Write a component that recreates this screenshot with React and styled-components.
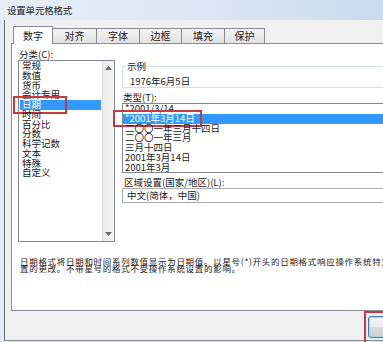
import React from 'react';
import styled, { createGlobalStyle } from 'styled-components';

const GlobalStyle = createGlobalStyle`
  html, body {
    margin: 0;
    padding: 0;
  }
  body {
    width: 383px;
    height: 342px;
    overflow: hidden;
    background: #dfe8f3;
    font-family: "Noto Sans CJK SC", "Noto Sans", sans-serif;
    color: #1a1a1a;
  }
`

const Window = styled.div`
  width: 383px;
  height: 342px;
  overflow: hidden;
  display: flex;
  flex-direction: column;
  background: #dfe8f3;
`

const TitleBar = styled.div`
  height: 20px;
  flex: none;
  display: flex;
  align-items: center;
  padding-left: 7px;
  background: linear-gradient(90deg, #e6eef8 0%, #dbe6f4 55%, #c8daef 100%);
  font-size: 9.5px;
  letter-spacing: -0.2px;
  color: #1e1e1e;
`

const Frame = styled.div`
  flex: 1;
  min-height: 0;
  display: flex;
  padding-left: 4px;
`

const Body = styled.div`
  width: 537px;
  flex: none;
  box-sizing: border-box;
  margin-bottom: 1px;
  display: flex;
  flex-direction: column;
  padding: 6px 6px 0 6px;
  background: #f0f0f0;
  border-left: 1px solid #5f6d7c;
  border-bottom: 1px solid #7a8898;
`

const TabRow = styled.div`
  display: flex;
  align-items: flex-end;
  height: 17px;
  padding-left: 2px;
  position: relative;
  z-index: 1;
`

const Tab = styled.div`
  width: ${p => p.$w}px;
  height: ${p => (p.$active ? 18 : 15)}px;
  margin-bottom: ${p => (p.$active ? -1 : 0)}px;
  margin-left: ${p => (p.$first ? 0 : -1)}px;
  box-sizing: border-box;
  display: flex;
  align-items: center;
  justify-content: center;
  font-size: 10px;
  line-height: 1;
  color: #222;
  border: 1px solid #898c95;
  border-bottom: none;
  background: ${p => (p.$active ? '#fff' : 'linear-gradient(#f4f4f4, #e2e2e2)')};
  position: relative;
  z-index: ${p => (p.$active ? 2 : 1)};
`

const Panel = styled.div`
  height: 268px;
  flex: none;
  box-sizing: border-box;
  border: 1px solid #898c95;
  background: #fff;
  padding: 5px 0 0 6px;
  display: flex;
  flex-direction: column;
`

const Top = styled.div`
  display: flex;
  gap: 7px;
`

const LeftCol = styled.div`
  width: 97px;
  flex: none;
  display: flex;
  flex-direction: column;
`

const Label = styled.div`
  font-size: 9.5px;
  line-height: ${p => p.$lh || 10}px;
  margin-top: ${p => p.$mt || 0}px;
  padding-left: ${p => p.$pl || 1}px;
  white-space: nowrap;
`

const CatList = styled.div`
  height: 182px;
  box-sizing: border-box;
  border: 1px solid #828790;
  display: flex;
`

const CatItems = styled.div`
  flex: 1;
  padding: 0 1px;
`

const Item = styled.div`
  height: 9.75px;
  line-height: 9.75px;
  font-size: 9.5px;
  padding-left: 2px;
  white-space: nowrap;
  position: relative;
  background: ${p => (p.$sel ? '#3399ff' : 'transparent')};
  color: ${p => (p.$sel ? '#fff' : '#1a1a1a')};
`

const ScrollBar = styled.div`
  width: 12px;
  flex: none;
  display: flex;
  flex-direction: column;
  justify-content: space-between;
  align-items: center;
  padding: 5px 0;
  box-sizing: border-box;
  background: linear-gradient(90deg, #ebebeb, #f6f6f6);
  border-left: 1px solid #e2e2e2;
`

const Mark = styled.div`
  position: absolute;
  left: ${p => p.$l}px;
  top: ${p => p.$t}px;
  width: ${p => p.$w}px;
  height: ${p => p.$h}px;
  box-sizing: border-box;
  border: 2px solid #c63a43;
  pointer-events: none;
`

const RightCol = styled.div`
  flex: 1;
  display: flex;
  flex-direction: column;
  padding-right: 12px;
`

const Group = styled.fieldset`
  margin: 12px 0 0 0;
  padding: 0 0 1px 7px;
  border: 1px solid #d5dfe5;
  min-width: 0;
`

const Legend = styled.legend`
  margin-left: -4px;
  padding: 0 1px;
  font-size: 9.5px;
  line-height: 10px;
`

const Sample = styled.div`
  margin-top: 5px;
  font-size: 9.5px;
  line-height: 10px;
`

const TypeList = styled.div`
  margin-top: 1px;
  height: 70px;
  box-sizing: border-box;
  border: 1px solid #828790;
  border-right-color: #b8bcc2;
`

const Select = styled.div`
  margin-top: 1px;
  height: 15px;
  box-sizing: border-box;
  border: 1px solid #abadb3;
  padding-left: 4px;
  font-size: 9.5px;
  line-height: 13px;
`

const Desc = styled.div`
  margin-top: 16px;
  padding-left: 2px;
  font-size: 8.5px;
  letter-spacing: 0.7px;
  line-height: 6.6px;
  white-space: nowrap;
  color: #1a1a1a;
`

const Footer = styled.div`
  flex: 1;
  display: flex;
  justify-content: flex-end;
  align-items: flex-start;
  gap: 7px;
  padding: 5px 10px 0 0;
`

const Button = styled.div`
  width: 75px;
  height: 22px;
  box-sizing: border-box;
  position: relative;
  display: flex;
  align-items: center;
  justify-content: center;
  font-size: 9.5px;
  border: 1px solid ${p => (p.$def ? '#3c7fb1' : '#707070')};
  border-radius: 3px;
  background: linear-gradient(#f2f2f2 0%, #ebebeb 50%, #dddddd 51%, #cfcfcf 100%);
  box-shadow: ${p => (p.$def ? 'inset 0 0 0 1px #a6d4f2' : 'inset 0 0 0 1px #fcfcfc')};
`

const Arrow = ({ up }) => (
  <svg width="7" height="4" viewBox="0 0 7 4">
    <path d={up ? 'M0 4 L3.5 0 L7 4 Z' : 'M0 0 L3.5 4 L7 0 Z'} fill="#6a6a6a" />
  </svg>
)

const tabs = [
  { name: '数字', w: 40 },
  { name: '对齐', w: 45 },
  { name: '字体', w: 44 },
  { name: '边框', w: 43 },
  { name: '填充', w: 44 },
  { name: '保护', w: 41 },
]

const categories = ['常规', '数值', '货币', '会计专用', '日期', '时间', '百分比', '分数', '科学记数', '文本', '特殊', '自定义']

const types = ['*2001/3/14', '*2001年3月14日', '二〇〇一年三月十四日', '二〇〇一年三月', '三月十四日', '2001年3月14日', '2001年3月']

export default function App() {
  return (
    <Window>
      <GlobalStyle />
      <TitleBar>设置单元格格式</TitleBar>
      <Frame>
        <Body>
          <TabRow>
            {tabs.map((t, i) => (
              <Tab key={t.name} $w={t.w} $active={i === 0} $first={i === 0}>{t.name}</Tab>
            ))}
          </TabRow>
          <Panel>
            <Top>
              <LeftCol>
                <Label $lh={11}>分类(C):</Label>
                <CatList>
                  <CatItems>
                    {categories.map(c => (
                      <Item key={c} $sel={c === '日期'}>
                        {c}
                        {c === '日期' && <Mark $l={-7} $t={-4} $w={54} $h={18} />}
                      </Item>
                    ))}
                  </CatItems>
                  <ScrollBar>
                    <Arrow up />
                    <Arrow />
                  </ScrollBar>
                </CatList>
              </LeftCol>
              <RightCol>
                <Group>
                  <Legend>示例</Legend>
                  <Sample>1976年6月5日</Sample>
                </Group>
                <Label $mt={4}>类型(T):</Label>
                <TypeList>
                  {types.map((t, i) => (
                    <Item key={t} $sel={i === 1}>
                      {t}
                      {i === 1 && <Mark $l={-10} $t={-4} $w={89} $h={17} />}
                    </Item>
                  ))}
                </TypeList>
                <Label $mt={4} $pl={2}>区域设置(国家/地区)(L):</Label>
                <Select>中文(简体，中国)</Select>
              </RightCol>
            </Top>
            <Desc>
              <div>日期格式将日期和时间系列数值显示为日期值。以星号(*)开头的日期格式响应操作系统特定的区域日期和时间设</div>
              <div>置的更改。不带星号的格式不受操作系统设置的影响。</div>
            </Desc>
          </Panel>
          <Footer>
            <Button $def>
              确定
              <Mark $l={-5} $t={-6} $w={84} $h={34} />
            </Button>
            <Button>取消</Button>
          </Footer>
        </Body>
      </Frame>
    </Window>
  )
}
